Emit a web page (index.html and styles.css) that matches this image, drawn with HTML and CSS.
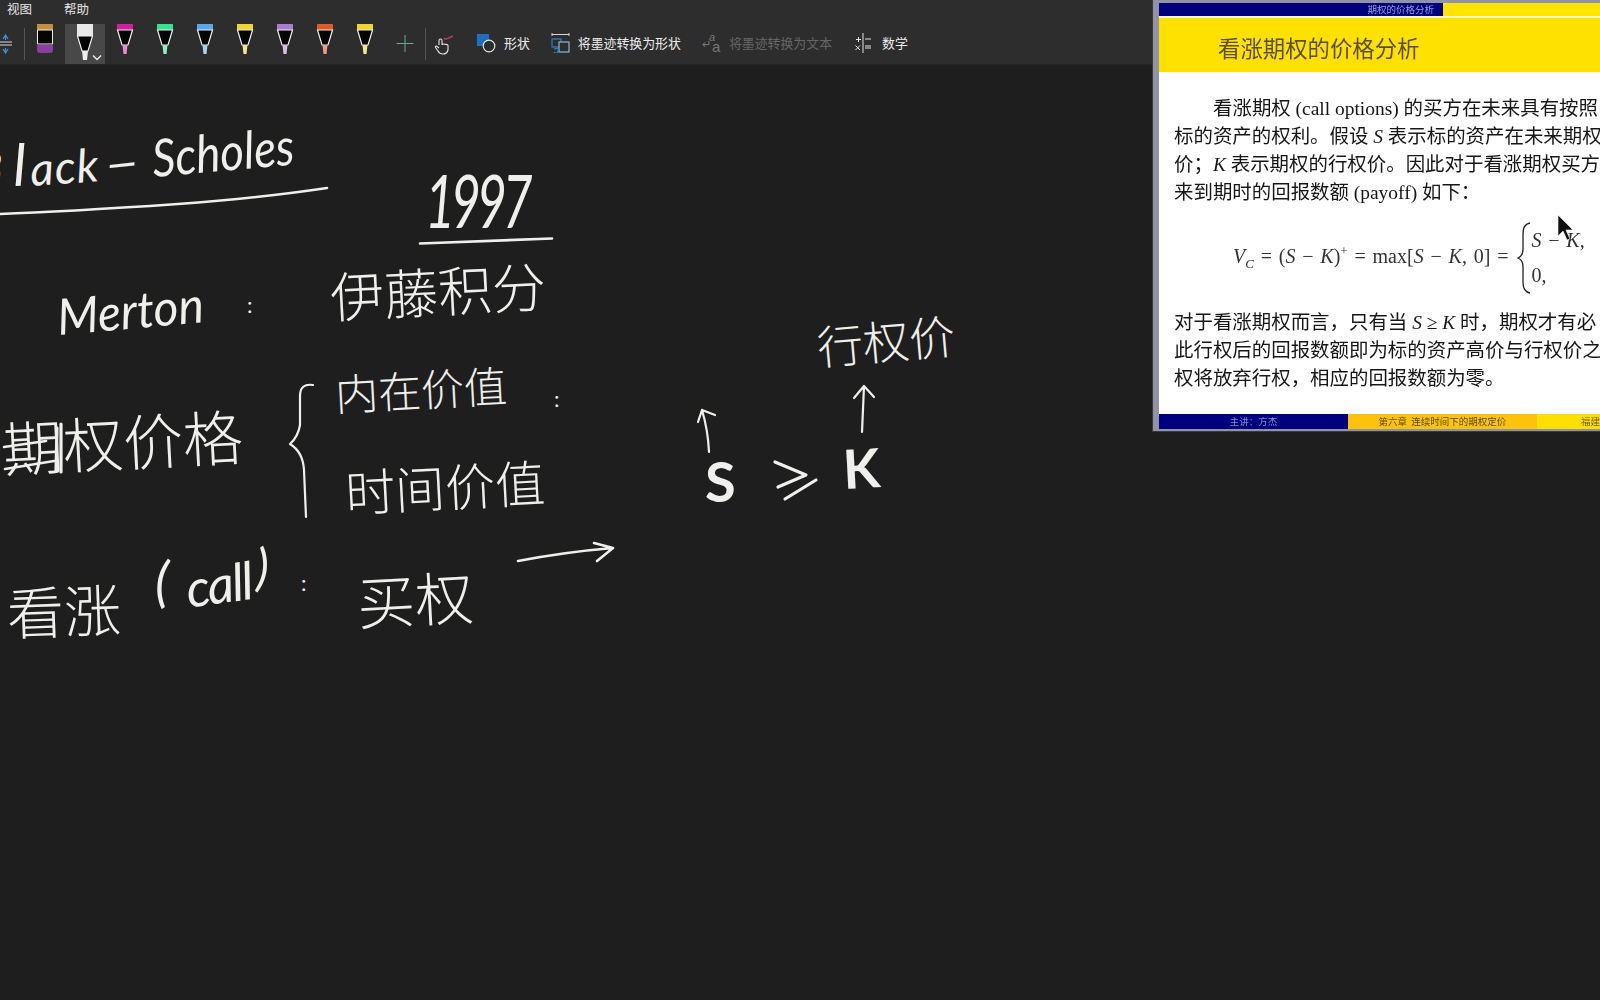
FILE: index.html
```html
<!DOCTYPE html>
<html lang="zh-CN">
<head>
<meta charset="utf-8">
<title>Ink board</title>
<link rel="stylesheet" href="styles.css">
</head>
<body>
<div class="app">
  <header class="toolbar">
    <nav class="menu"><span class="menu-item m1">视图</span><span class="menu-item">帮助</span></nav>
    <div class="tools">
      <svg class="lead-icon" viewBox="0 0 12 24" width="12" height="24"><path d="M0 10H12M0 13H12" stroke="#d8d8d8" stroke-width="1"/><path d="M3 7L5.500 3L8 7M5.500 3V8M3 17L5.500 21L8 17M5.500 16V21" fill="none" stroke="#3f8fd6" stroke-width="1.300"/></svg>
      <i class="sep"></i>
      <span class="slot">
        <svg viewBox="0 0 40 40" width="40" height="40"><path d="M12 0H28V6H12Z" fill="#c68f3b"/><path d="M12.500 6H27.500V20H12.500Z" fill="#050505" stroke="#eee" stroke-width="1"/><path d="M12 20.500H28V26Q28 29 25 29H15Q12 29 12 26Z" fill="#8b3f9c"/></svg>
      </span>
      <span class="slot slot-on">
        <svg viewBox="0 0 40 40" width="40" height="40"><path d="M12 0H28V12H12Z" fill="#e8e8e8"/><path d="M12.500 12H27.500L23 27H17Z" fill="#050505" stroke="#eee" stroke-width="1.200"/><path d="M17 27H23L22 36H18Z" fill="#eee"/><path d="M28 31.500L32 35.500L36 31.500" fill="none" stroke="#eee" stroke-width="1.400"/></svg>
      </span>
      <span class="slot"><svg viewBox="0 0 40 40" width="40" height="40"><path d="M12 0H28V6H12Z" fill="#d31f9f"/><path d="M12.500 6H27.500L23 21H17Z" fill="#050505" stroke="#eee" stroke-width="1.200"/><path d="M17.500 21H22.500L21.500 30H18.500Z" fill="#f08ad0"/></svg></span>
      <span class="slot"><svg viewBox="0 0 40 40" width="40" height="40"><path d="M12 0H28V6H12Z" fill="#35e08f"/><path d="M12.500 6H27.500L23 21H17Z" fill="#050505" stroke="#eee" stroke-width="1.200"/><path d="M17.500 21H22.500L21.500 30H18.500Z" fill="#8ff0c4"/></svg></span>
      <span class="slot"><svg viewBox="0 0 40 40" width="40" height="40"><path d="M12 0H28V6H12Z" fill="#55a9e8"/><path d="M12.500 6H27.500L23 21H17Z" fill="#050505" stroke="#eee" stroke-width="1.200"/><path d="M17.500 21H22.500L21.500 30H18.500Z" fill="#a5d5f2"/></svg></span>
      <span class="slot"><svg viewBox="0 0 40 40" width="40" height="40"><path d="M12 0H28V6H12Z" fill="#f2d52a"/><path d="M12.500 6H27.500L23 21H17Z" fill="#050505" stroke="#eee" stroke-width="1.200"/><path d="M17.500 21H22.500L21.500 30H18.500Z" fill="#f5e88c"/></svg></span>
      <span class="slot"><svg viewBox="0 0 40 40" width="40" height="40"><path d="M12 0H28V6H12Z" fill="#a87cd0"/><path d="M12.500 6H27.500L23 21H17Z" fill="#050505" stroke="#eee" stroke-width="1.200"/><path d="M17.500 21H22.500L21.500 30H18.500Z" fill="#d5c0ea"/></svg></span>
      <span class="slot"><svg viewBox="0 0 40 40" width="40" height="40"><path d="M12 0H28V6H12Z" fill="#e05a28"/><path d="M12.500 6H27.500L23 21H17Z" fill="#050505" stroke="#eee" stroke-width="1.200"/><path d="M17.500 21H22.500L21.500 30H18.500Z" fill="#ee9c85"/></svg></span>
      <span class="slot"><svg viewBox="0 0 40 40" width="40" height="40"><path d="M12 0H28V6H12Z" fill="#f2d52a"/><path d="M12.500 6H27.500L23 21H17Z" fill="#050505" stroke="#eee" stroke-width="1.200"/><path d="M17.500 21H22.500L21.500 30H18.500Z" fill="#f5e88c"/></svg></span>
      <span class="slot"><svg viewBox="0 0 40 40" width="40" height="40"><path d="M20 11V28M11.500 19.500H28.500" stroke="#5fae8f" stroke-width="1"/></svg></span>
      <i class="sep"></i>
      <span class="tool tool-hand">
        <svg viewBox="0 0 24 24" width="24" height="24"><path d="M12 7C14 10 18 6 21 5" fill="none" stroke="#b8404f" stroke-width="1.400"/><path d="M7 14V9.500Q7 8 8.500 8T10 9.500V14M10 13.500Q12 12.500 13.500 13.500Q15.500 13 16 14.500V19Q15 23 11 23Q7.500 23 6 20L3.500 16.500Q3 15 4.500 15L7 17" fill="none" stroke="#e4e4e4" stroke-width="1.100"/></svg>
      </span>
      <span class="tool tool-shape">
        <svg viewBox="0 0 20 20" width="20" height="20"><rect x="1" y="1" width="12" height="12" fill="#1f6fc0"/><circle cx="13" cy="13" r="5.800" fill="#2d2d2d" stroke="#e4e4e4" stroke-width="1.200"/></svg>
        <span class="label">形状</span>
      </span>
      <span class="tool tool-conv">
        <svg viewBox="0 0 20 20" width="20" height="20"><path d="M1 1.500H18M1 0V3M18 0V3" stroke="#d8d8d8" stroke-width="1" fill="none"/><rect x="1" y="6" width="9" height="8" fill="none" stroke="#2f7fc8" stroke-width="1.200"/><rect x="8" y="9" width="10" height="10" fill="#2d2d2d" stroke="#8db6d8" stroke-width="1.200"/><path d="M3 16Q8 14 7 18T3 19" fill="none" stroke="#2f7fc8" stroke-width="1.200"/></svg>
        <span class="label">将墨迹转换为形状</span>
      </span>
      <span class="tool tool-text off">
        <span class="aa"><span class="aa-s">a</span><span class="aa-b">a</span></span>
        <span class="label">将墨迹转换为文本</span>
      </span>
      <span class="tool tool-math">
        <svg viewBox="0 0 20 20" width="20" height="20"><path d="M10 0V20M3 6.500H8M5.500 4V9M12 6H18M12 15H18M12 13H18M2.500 12.500L7 17M7 12.500L2.500 17" stroke="#e4e4e4" stroke-width="1"/></svg>
        <span class="label">数学</span>
      </span>
    </div>
  </header>

  <main class="board">
    <svg class="strokes" viewBox="0 65 1600 935" width="1600" height="935">
      <g fill="none" stroke="#efefeb" stroke-linecap="round" stroke-linejoin="round">
        <path class="s-w" d="M-2 214Q60 212 178 204Q260 198 327 188"/>
        <path class="s-w" d="M420 243.500Q490 241 552 238.500"/>
        <path class="s-m" d="M313 385Q300 383 300 396L300 425Q298 437 290 444Q303 452 304 470L306 517"/>
        <path class="s-w" d="M518 561Q565 552 613 548M594 543L613 548L597 561"/>
        <path class="s-m" d="M709 452Q708 430 702 410M698 422L702 410L715 415"/>
        <path class="s-m" d="M862 432L864 386M854 398L864 386L874 397"/>
        <path class="s-t" d="M775 462L806 475L778 487M785 499L816 480"/>
        <path class="s-w" d="M4 447L46 441M5 469L54 461"/>
        <path class="s-t" d="M57 428L56 470M61 424L61 472"/>
      </g>
    </svg>

    <span class="ink lat bs0">B</span>
    <span class="ink lat bs1">l</span>
    <span class="ink lat bs2">ack</span>
    <span class="ink lat bs3">Scholes</span>
    <span class="ink lat bs4">−</span>
    <span class="ink lat yr">1997</span>
    <span class="ink lat mer">Merton</span>
    <span class="ink lat col c1">:</span>
    <span class="ink cjk ito">伊藤积分</span>
    <span class="ink cjk qjg">期权价格</span>
    <span class="ink cjk nzj">内在价值</span>
    <span class="ink lat col c2">:</span>
    <span class="ink cjk sjj">时间价值</span>
    <span class="ink cjk kz">看涨</span>
    <span class="ink lat lp">(</span>
    <span class="ink lat call">call</span>
    <span class="ink lat rp">)</span>
    <span class="ink lat col c3">:</span>
    <span class="ink cjk mq">买权</span>
    <span class="ink lat ss">S</span>
    <span class="ink lat kk">K</span>
    <span class="ink cjk xqj">行权价</span>

    <section class="slide">
      <div class="slide-top"><div class="nav-blue">期权的价格分析</div></div>
      <h1 class="slide-title">看涨期权的价格分析</h1>
      <div class="slide-body">
        <p class="ln indent">看涨期权 (call options) 的买方在未来具有按照</p>
        <p class="ln">标的资产的权利。假设 <em>S</em> 表示标的资产在未来期权</p>
        <p class="ln">价；<em>K</em> 表示期权的行权价。因此对于看涨期权买方</p>
        <p class="ln">来到期时的回报数额 (payoff) 如下：</p>
        <div class="formula">
          <span class="f-main"><em>V<sub>C</sub></em> = (<em>S</em> − <em>K</em>)<sup>+</sup> = max[<em>S</em> − <em>K</em>, 0] =</span>
          <svg class="f-brace" viewBox="0 0 14 72" width="14" height="72"><path d="M13 1Q6 2 6 12V27Q6 34 1 36Q6 38 6 45V60Q6 70 13 71" fill="none" stroke="#222" stroke-width="1.300"/></svg>
          <span class="f-cases"><span><em>S</em> − <em>K</em>,</span><span>0,</span></span>
        </div>
        <p class="ln">对于看涨期权而言，只有当 <em>S</em> ≥ <em>K</em> 时，期权才有必</p>
        <p class="ln">此行权后的回报数额即为标的资产高价与行权价之</p>
        <p class="ln">权将放弃行权，相应的回报数额为零。</p>
      </div>
      <footer class="slide-foot">
        <span class="ft ft-a">主讲：方杰</span>
        <span class="ft ft-b">第六章&nbsp; 连续时间下的期权定价</span>
        <span class="ft ft-c">福建</span>
      </footer>
      <svg class="cursor" viewBox="0 0 20 28" width="20" height="28"><path d="M1 1V22L6 17L10 26L13 25L9 16H16Z" fill="#111" stroke="#fff" stroke-width="0.600"/></svg>
    </section>
  </main>
</div>
</body>
</html>
```
FILE: styles.css
```css
* { box-sizing: border-box; }
html, body { margin: 0; height: 100%; overflow: hidden; background: #1e1e1e; }
.app { width: 1600px; height: 1000px; display: flex; flex-direction: column; overflow: hidden; font-family: "Noto Sans CJK SC", sans-serif; }

.toolbar { height: 65px; background: #2d2d2d; border-bottom: 1px solid #242424; flex: none; }
.menu { height: 24px; display: flex; padding: 2px 0 0 7px; align-items: flex-start; }
.menu-item { font-size: 12.500px; color: #e8e8e8; line-height: 14px; }
.m1 { margin-right: 32px; }
.tools { display: flex; height: 40px; align-items: flex-start; }
.lead-icon { margin-top: 8px; flex: none; width: 12px; margin-right: 12px; }
.sep { width: 1px; height: 32px; margin-top: 4px; background: #555; flex: none; }
.slot { width: 40px; height: 40px; flex: none; display: block; }
.slot svg { display: block; }
.slot-on { background: #484848; }
.tool { display: flex; align-items: center; height: 37px; flex: none; }
.tool svg { display: block; flex: none; }
.label { font-size: 12.900px; color: #ececec; white-space: nowrap; margin-left: 8px; }
.tool-hand { margin-left: 6px; }
.tool-shape { margin-left: 20px; }
.tool-conv { margin-left: 21px; }
.tool-conv .label { margin-left: 7px; }
.tool-text { margin-left: 21px; }
.tool-text .label { margin-left: 7px; color: #666; }
.tool-math { margin-left: 21px; }
.tool-math .label { margin-left: 9px; }
.aa { width: 20px; height: 22px; position: relative; display: block; flex: none; color: #777; font-family: "Liberation Sans", sans-serif; }
.aa-s { position: absolute; left: 7px; top: -1px; font-size: 11px; font-style: italic; }
.aa-b { position: absolute; left: 10px; top: 6px; font-size: 15px; }
.aa::before { content: "↵"; position: absolute; left: 0; top: 6px; font-size: 11px; color: #777; }

.board { flex: 1; position: relative; background: #1e1e1e; }
.strokes { position: absolute; left: 0; top: 0; }
.s-t { stroke-width: 3.200; }
.s-w { stroke-width: 2.600; }
.s-m { stroke-width: 2.200; }

.ink { position: absolute; color: #efefeb; line-height: 1; white-space: nowrap; transform-origin: 0 50%; }
.lat { font-family: Lato, sans-serif; font-weight: 400; font-style: italic; }
.cjk { font-family: "Noto Sans CJK SC", sans-serif; font-weight: 300; }

.bs0 { left: -24px; top: 80px; font-size: 44px; }
.bs1 { left: 13px; top: 70px; font-size: 58px; transform: rotate(-2deg); }
.bs2 { left: 30px; top: 81px; font-size: 46px; letter-spacing: 1px; transform: rotate(-4deg); }
.bs4 { left: 105px; top: 76px; font-size: 48px; transform: rotate(-6deg) scaleX(1.200); }
.bs3 { left: 152px; top: 66px; font-size: 52px; transform: rotate(-5deg) scaleX(.880); }
.yr { left: 425px; top: 98px; font-size: 74px; letter-spacing: -6px; transform: scaleX(.700); }
.mer { left: 57px; top: 226px; font-size: 50px; transform: rotate(-5deg) scaleX(.960); }
.col { font-size: 22px; font-style: normal; }
.c1 { left: 247px; top: 229px; }
.c2 { left: 554px; top: 323px; }
.c3 { left: 301px; top: 507px; }
.ito { left: 330px; top: 203px; font-size: 54px; transform: rotate(-3deg); }
.qjg { left: 3px; top: 351px; font-size: 60px; transform: rotate(-3deg); }
.nzj { left: 335px; top: 306px; font-size: 43px; transform: rotate(-3deg); }
.sjj { left: 345px; top: 400px; font-size: 50px; transform: rotate(-3deg); }
.kz { left: 7px; top: 517px; font-size: 57px; transform: rotate(-2deg); }
.lp { left: 155px; top: 488px; font-size: 55px; }
.call { left: 186px; top: 497px; font-size: 52px; letter-spacing: -2px; transform: rotate(-8deg); }
.rp { left: 256px; top: 476px; font-size: 50px; }
.mq { left: 357px; top: 506px; font-size: 58px; transform: rotate(-3deg); }
.ss { left: 705px; top: 388px; font-size: 56px; font-style: normal; font-weight: 700; }
.kk { left: 843px; top: 377px; font-size: 54px; font-style: normal; font-weight: 700; transform: rotate(-3deg); }
.xqj { left: 817px; top: 257px; font-size: 46px; transform: rotate(-5deg); }

.slide { position: absolute; left: 1153px; top: -65px; width: 447px; height: 431px; padding: 3px 0 2px 6px; background: #8f93a5; display: flex; flex-direction: column; overflow: hidden; filter: blur(.35px); box-shadow: 0 0 0 1px #3a3a3a; font-family: "Liberation Serif", "Noto Sans CJK SC", serif; }
.slide-top { height: 13px; background: #ffe400; flex: none; }
.nav-blue { width: 284px; height: 13px; background: #00007f; color: #9a9ad0; font-size: 9.500px; line-height: 13px; text-align: right; padding-right: 9px; font-family: "Noto Sans CJK SC", sans-serif; }
.slide-title { margin: 0; height: 56px; flex: none; border-top: 2px solid #fff8c0; background: #ffe100; padding: 5px 0 0 59px; color: #5a4e22; font: 400 22.400px/49px "Noto Sans CJK SC", sans-serif; white-space: nowrap; }
.slide-body { flex: 1; background: #fff; padding: 22.500px 0 0 15px; color: #161616; font-size: 19.450px; }
.ln { margin: 0; height: 28.300px; line-height: 28.300px; white-space: nowrap; }
.indent { padding-left: 39px; }
.ln em, .formula em { font-style: italic; }
.formula { display: flex; align-items: center; height: 72px; margin: 14.500px 0 14.500px; padding-left: 59px; font-size: 20px; word-spacing: 1.800px; color: #333; white-space: nowrap; }
.f-main { display: block; margin-bottom: 4px; }
.f-main sub { font-size: 13px; line-height: 0; }
.f-main sup { font-size: 13px; line-height: 0; }
.f-brace { margin-left: 9px; flex: none; }
.f-cases { display: flex; flex-direction: column; gap: 12px; }
.f-cases span { line-height: 23px; }
.slide-foot { height: 15px; flex: none; display: flex; font-family: "Noto Sans CJK SC", sans-serif; font-size: 9.500px; line-height: 14px; }
.ft { display: block; text-align: center; white-space: nowrap; overflow: hidden; }
.ft-a { width: 189px; background: #00007f; color: #8a8ac8; }
.ft-b { width: 189px; background: #fdc20c; color: #5c4a10; }
.ft-c { flex: 1; background: #ffdf00; color: #6a5c10; text-align: left; padding-left: 44px; }
.cursor { position: absolute; left: 404px; top: 214px; }
```
